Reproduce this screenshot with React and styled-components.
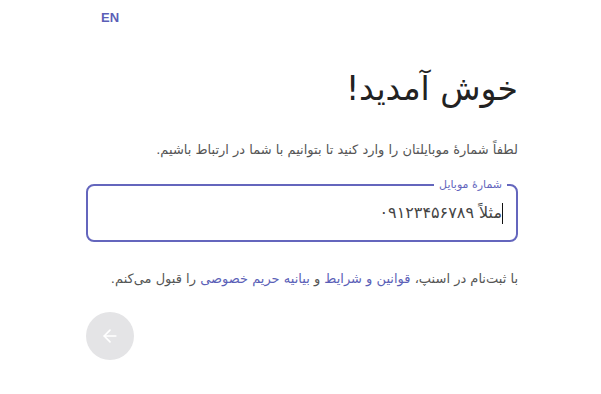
import React from 'react';
import styled, { createGlobalStyle } from 'styled-components';

const GlobalStyle = createGlobalStyle`
  html, body {
    margin: 0;
    background: #fff;
    font-family: 'DejaVu Sans', 'Noto Sans', sans-serif;
  }
`;

const Page = styled.div`
  width: 601px;
  height: 394px;
  position: relative;
  overflow: hidden;
`;

const LangBar = styled.div`
  height: 34px;
  padding: 7px 0 0 101px;
  box-sizing: border-box;
`;

const LangButton = styled.button`
  border: 0;
  background: none;
  padding: 0;
  font-family: 'Liberation Sans', Arial, sans-serif;
  font-size: 13px;
  font-weight: 600;
  color: #5b5fb7;
  cursor: pointer;
`;

const Column = styled.main`
  direction: rtl;
  width: 432px;
  margin-left: 86px;
  display: flex;
  flex-direction: column;
`;

const Title = styled.h1`
  margin: 33px 0 0 0;
  font-size: 33px;
  font-weight: 400;
  line-height: 44px;
  color: #222;
`;

const Subtitle = styled.p`
  margin: 29px 0 0 0;
  font-size: 13px;
  line-height: 20px;
  color: #555;
`;

const Field = styled.fieldset`
  margin: 18px 0 0 0;
  padding: 0 13px 0 14px;
  height: 64px;
  box-sizing: border-box;
  border: 2px solid #6466bd;
  border-radius: 8px;
`;

const Legend = styled.legend`
  padding: 0 5px;
  margin-right: -4px;
  font-size: 11px;
  color: #6466bd;
`;

const InputText = styled.div`
  display: flex;
  align-items: center;
  margin-top: 11px;
  font-size: 16px;
  color: #444;
  line-height: 22px;
  &::before {
    content: '';
    width: 1px;
    height: 21px;
    background: #111;
  }
`;

const Terms = styled.p`
  margin: 27px 0 0 0;
  font-size: 13px;
  line-height: 20px;
  color: #555;
`;

const Link = styled.a`
  color: #5b5fb7;
  text-decoration: none;
`;

const Actions = styled.div`
  display: flex;
  justify-content: flex-end;
  margin-top: 23px;
`;

const RoundButton = styled.button`
  width: 48px;
  height: 48px;
  border-radius: 50%;
  border: 0;
  background: #e4e4e6;
  display: flex;
  align-items: center;
  justify-content: center;
  padding: 0;
`;

function ArrowLeft() {
  return (
    <svg width="20" height="20" viewBox="0 0 24 24" fill="none" stroke="#fff" strokeWidth="2" strokeLinecap="round" strokeLinejoin="round">
      <path d="M19 12H5" />
      <path d="M12 19l-7-7 7-7" />
    </svg>
  );
}

export default function App() {
  return (
    <Page>
      <GlobalStyle />
      <LangBar>
        <LangButton>EN</LangButton>
      </LangBar>
      <Column>
        <Title>خوش آمدید!</Title>
        <Subtitle>لطفاً شمارهٔ موبایلتان را وارد کنید تا بتوانیم با شما در ارتباط باشیم.</Subtitle>
        <Field>
          <Legend>شمارهٔ موبایل</Legend>
          <InputText>مثلاً ۰۹۱۲۳۴۵۶۷۸۹</InputText>
        </Field>
        <Terms>
          با ثبت‌نام در اسنپ، <Link>قوانین و شرایط</Link> و <Link>بیانیه حریم خصوصی</Link> را قبول می‌کنم.
        </Terms>
        <Actions>
          <RoundButton aria-label="next">
            <ArrowLeft />
          </RoundButton>
        </Actions>
      </Column>
    </Page>
  );
}
